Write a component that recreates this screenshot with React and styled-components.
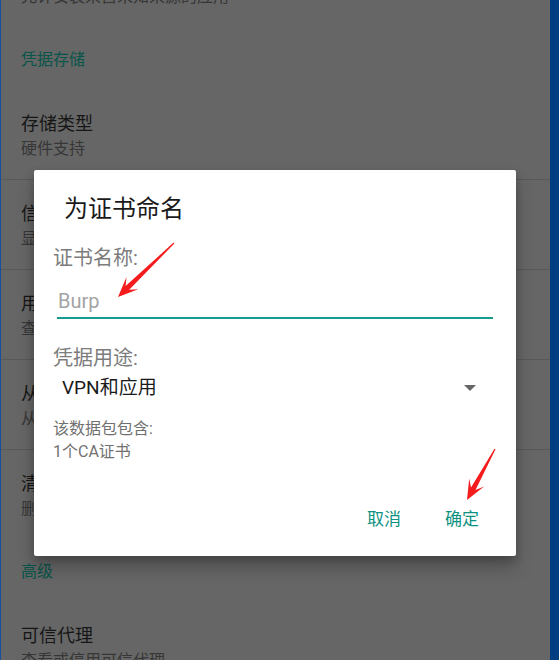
import React from "react";
import styled, {createGlobalStyle} from "styled-components";

const GlobalStyle = createGlobalStyle`
  html, body {
    margin: 0;
    padding: 0;
    height: 660px;
    overflow: hidden;
    background: #666666;
    font-family: Roboto, "Noto Sans CJK SC", "Noto Sans", sans-serif;
  }
`;

const Screen = styled.div`
  position: relative;
  display: flex;
  align-items: flex-start;
  width: 559px;
  height: 660px;
  overflow: hidden;
`;

const Strip = styled.div`
  width: ${p => p.width}px;
  height: 660px;
  flex-shrink: 0;
  background: ${p => p.color};
`;

const Settings = styled.div`
  flex: 1;
  display: flex;
  flex-direction: column;
  margin-top: -62px;
  background: #666666;
`;

const SectionHeader = styled.div`
  height: 62px;
  flex-shrink: 0;
  box-sizing: border-box;
  padding: 22px 0 0 20px;
  font-size: 16px;
  line-height: 20px;
  color: #08554a;
`;

const Row = styled.div`
  height: 90px;
  flex-shrink: 0;
  box-sizing: border-box;
  padding: 21px 0 0 20px;
  border-bottom: 1px solid ${p => (p.last ? "transparent" : "#595959")};
`;

const RowTitle = styled.div`
  font-size: 18px;
  line-height: 26px;
  color: #161616;
`;

const RowSub = styled.div`
  font-size: 16px;
  line-height: 24px;
  color: #363636;
`;

const Dialog = styled.div`
  position: absolute;
  left: 34px;
  top: 170px;
  width: 482px;
  height: 386px;
  background: #ffffff;
  border-radius: 2px;
  box-shadow: 0 12px 18px rgba(0, 0, 0, 0.22), 0 4px 8px rgba(0, 0, 0, 0.18);
  display: flex;
  flex-direction: column;
`;

const DialogTitle = styled.div`
  margin: 23px 0 0 30px;
  font-size: 24px;
  line-height: 32px;
  color: #1a1a1a;
`;

const DialogBody = styled.div`
  display: flex;
  flex-direction: column;
  padding: 0 23px 0 19px;
`;

const FieldLabel = styled.div`
  margin-top: ${p => p.gap}px;
  font-size: 20px;
  line-height: 26px;
  color: #7c7c7c;
`;

const InputLine = styled.div`
  margin: 17px 0 0 4px;
  padding: 0 0 3px 1px;
  border-bottom: 2px solid #169c8c;
  font-size: 20px;
  line-height: 26px;
  color: #a3a3a3;
`;

const Spinner = styled.div`
  margin-top: 4px;
  display: flex;
  align-items: center;
  justify-content: space-between;
  padding: 0 17px 0 9px;
  font-size: 19px;
  line-height: 26px;
  color: #1a1a1a;
`;

const Caret = styled.div`
  width: 0;
  height: 0;
  border-left: 6.5px solid transparent;
  border-right: 6.5px solid transparent;
  border-top: 6.5px solid #666666;
`;

const Info = styled.div`
  margin-top: 16px;
  font-size: 16px;
  line-height: 23px;
  color: #717171;
`;

const Actions = styled.div`
  margin-top: auto;
  display: flex;
  justify-content: flex-end;
  gap: 44px;
  padding: 0 37px 25px 0;
`;

const ActionButton = styled.div`
  font-size: 17px;
  line-height: 24px;
  color: #0d9282;
`;

const Marks = styled.svg`
  position: absolute;
  left: 0;
  top: 0;
  pointer-events: none;
`;

function arrowPoints(tail, tip) {
  const dx = tip[0] - tail[0];
  const dy = tip[1] - tail[1];
  const len = Math.hypot(dx, dy);
  const ux = dx / len, uy = dy / len;
  const nx = -uy, ny = ux;
  const at = (back, side) => [tip[0] - ux * back + nx * side, tip[1] - uy * back + ny * side];
  const pts = [
    [tail[0] + nx * 0.6, tail[1] + ny * 0.6],
    at(13, 2.6),
    at(20, 8.5),
    tip,
    at(20, -8.5),
    at(13, -2.6),
    [tail[0] - nx * 0.6, tail[1] - ny * 0.6],
  ];
  return pts.map(p => p.map(v => v.toFixed(1)).join(",")).join(" ");
}

const rows = [
  {title: "未知来源", sub: "允许安装来自未知来源的应用", last: true},
  {header: "凭据存储"},
  {title: "存储类型", sub: "硬件支持"},
  {title: "信任的凭据", sub: "显示可信的CA证书"},
  {title: "用户凭据", sub: "查看和修改存储的凭据"},
  {title: "从存储设备安装", sub: "从存储设备安装证书"},
  {title: "清除凭据", sub: "删除所有证书", last: true},
  {header: "高级"},
  {title: "可信代理", sub: "查看或停用可信代理"},
];

export default function App() {
  return (
    <Screen>
      <GlobalStyle/>
      <Strip width={1} color="#1450a0"/>
      <Settings>
        {rows.map((r, i) => r.header ? (
          <SectionHeader key={i}>{r.header}</SectionHeader>
        ) : (
          <Row key={i} last={r.last}>
            <RowTitle>{r.title}</RowTitle>
            <RowSub>{r.sub}</RowSub>
          </Row>
        ))}
      </Settings>
      <Strip width={9} color="#003e82"/>

      <Dialog>
        <DialogTitle>为证书命名</DialogTitle>
        <DialogBody>
          <FieldLabel gap={20}>证书名称:</FieldLabel>
          <InputLine>Burp</InputLine>
          <FieldLabel gap={26}>凭据用途:</FieldLabel>
          <Spinner>
            <span>VPN和应用</span>
            <Caret/>
          </Spinner>
          <Info>
            该数据包包含:<br/>
            1个CA证书
          </Info>
        </DialogBody>
        <Actions>
          <ActionButton>取消</ActionButton>
          <ActionButton>确定</ActionButton>
        </Actions>
      </Dialog>

      <Marks width="559" height="660">
        <polygon points={arrowPoints([174, 243], [118, 297])} fill="#f41c1c"/>
        <polygon points={arrowPoints([495, 449], [467, 500])} fill="#f41c1c"/>
      </Marks>
    </Screen>
  );
}
